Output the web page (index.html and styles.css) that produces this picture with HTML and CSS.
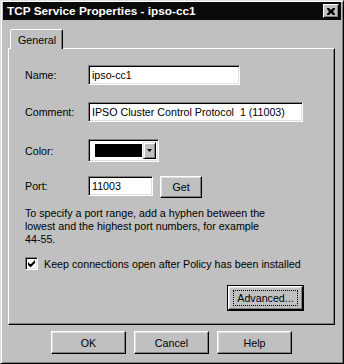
FILE: index.html
```html
<!DOCTYPE html>
<html lang="en">
<head>
    <meta charset="UTF-8">
    <title>TCP Service Properties - ipso-cc1</title>
    <link rel="stylesheet" href="styles.css">
</head>
<body>
    <div class="window">
        <div class="titlebar">
            <span class="title">TCP Service Properties - ipso-cc1</span>
            <span class="close-btn">
                <svg width="8" height="7" viewBox="0 0 8 7">
                    <path d="M0 0h2l2 2 2-2h2v1l-2 2.5 2 2.5v1h-2l-2-2-2 2h-2v-1l2-2.5-2-2.5z" fill="#000"/>
                </svg>
            </span>
        </div>
        <div class="body">
            <div class="tabs">
                <div class="tab">General</div>
            </div>
            <div class="panel">
                <div class="row row-name">
                    <span class="label">Name:</span>
                    <div class="field field-name">ipso-cc1</div>
                </div>
                <div class="row row-comment">
                    <span class="label">Comment:</span>
                    <div class="field field-comment">IPSO Cluster Control Protocol &nbsp;1 (11003)</div>
                </div>
                <div class="row row-color">
                    <span class="label">Color:</span>
                    <div class="combo">
                        <div class="swatch"></div>
                        <div class="combo-arrow">
                            <svg width="5" height="3" viewBox="0 0 5 3"><path d="M0 0h5l-2.5 3z" fill="#000"/></svg>
                        </div>
                    </div>
                </div>
                <div class="row row-port">
                    <span class="label">Port:</span>
                    <div class="field field-port">11003</div>
                    <div class="btn btn-get">Get</div>
                </div>
                <p class="hint">To specify a port range, add a hyphen between the<br>lowest and the highest port numbers, for example<br>44-55.</p>
                <div class="check-row">
                    <span class="checkbox">
                        <svg width="7" height="7" viewBox="0 0 7 7"><path d="M0 2v3l2 2h1l4-4v-3l-4 4h-1z" fill="#000"/></svg>
                    </span>
                    <span>Keep connections open after Policy has been installed</span>
                </div>
                <div class="advanced-row">
                    <div class="btn btn-default"><span class="focus">Advanced...</span></div>
                </div>
            </div>
            <div class="footer">
                <div class="btn btn-footer">OK</div>
                <div class="btn btn-footer">Cancel</div>
                <div class="btn btn-footer">Help</div>
            </div>
        </div>
    </div>
</body>
</html>
```

FILE: styles.css
```css
*{
    box-sizing: border-box;
}
html,
body {
    margin: 0;
    padding: 0;
    background-color: #c0c0c0;
    font-family: 'Liberation Sans', Arial, sans-serif;
    font-size: 10.7px;
    color: #000;
}
.window {
    width: 344px;
    height: 364px;
    padding: 2px;
    background-color: #c0c0c0;
    border: 1px solid;
    border-color: #dfdfdf #000 #000 #dfdfdf;
    box-shadow: inset 1px 1px #fff, inset -1px -1px #808080;
}
.titlebar {
    height: 18px;
    margin-top: -1px;
    background-color: #0a0a0a;
    display: flex;
    align-items: center;
    justify-content: space-between;
    padding: 0 2px 0 4px;
}
.title {
    color: #fff;
    font-weight: bold;
    font-size: 11.8px;
}
.close-btn {
    width: 16px;
    height: 14px;
    background-color: #c0c0c0;
    border: 1px solid;
    border-color: #fff #000 #000 #fff;
    box-shadow: inset -1px -1px #808080;
    display: flex;
    align-items: center;
    justify-content: center;
}
.body {
    padding: 9px 5px 0 5px;
}
.tabs {
    display: flex;
    padding-left: 2px;
    height: 19px;
    position: relative;
    z-index: 1;
}
.tab {
    width: 53px;
    height: 20px;
    padding: 4px 0 0 7px;
    background-color: #c0c0c0;
    border: 1px solid;
    border-bottom: none;
    border-color: #fff #000 #000 #fff;
    border-radius: 2px 2px 0 0;
    box-shadow: inset -1px 0 #808080;
}
.panel {
    width: 327px;
    height: 277px;
    padding: 16px 0 0 16px;
    border: 1px solid;
    border-color: #fff #000 #000 #fff;
    box-shadow: inset -1px -1px #808080;
}
.row {
    display: flex;
    align-items: center;
}
.label {
    width: 63px;
}
.field {
    height: 20px;
    padding: 3px 0 0 3px;
    background-color: #fff;
    border: 1px solid;
    border-color: #808080 #fff #fff #808080;
    box-shadow: inset 1px 1px #000, inset -1px -1px #dfdfdf;
    white-space: pre;
}
.field-name {
    width: 152px;
}
.row-comment {
    margin-top: 17px;
}
.field-comment {
    width: 215px;
}
.row-color {
    margin-top: 17px;
}
.combo {
    width: 71px;
    height: 23px;
    display: flex;
    align-items: center;
    padding: 2px 2px 2px 6px;
    background-color: #fff;
    border: 1px solid;
    border-color: #808080 #fff #fff #808080;
    box-shadow: inset 1px 1px #000, inset -1px -1px #dfdfdf;
}
.swatch {
    width: 47px;
    height: 13px;
    background-color: #000;
}
.combo-arrow {
    margin-left: auto;
    width: 13px;
    height: 17px;
    background-color: #c0c0c0;
    border: 1px solid;
    border-color: #dfdfdf #000 #000 #dfdfdf;
    box-shadow: inset 1px 1px #fff, inset -1px -1px #808080;
    display: flex;
    align-items: center;
    justify-content: center;
}
.row-port {
    margin-top: 14px;
    align-items: flex-start;
}
.row-port .label {
    padding-top: 4px;
}
.field-port {
    width: 65px;
}
.btn {
    background-color: #c0c0c0;
    border: 1px solid;
    border-color: #fff #000 #000 #fff;
    box-shadow: inset -1px -1px #808080, inset 1px 1px #dfdfdf;
    display: flex;
    align-items: center;
    justify-content: center;
}
.btn-get {
    width: 42px;
    height: 22px;
    margin-left: 7px;
}
.hint {
    margin: 9px 0 0 0;
    line-height: 13px;
}
.check-row {
    margin-top: 11px;
    display: flex;
    align-items: center;
    gap: 6px;
}
.checkbox {
    width: 13px;
    height: 13px;
    background-color: #fff;
    border: 1px solid;
    border-color: #808080 #fff #fff #808080;
    box-shadow: inset 1px 1px #000, inset -1px -1px #dfdfdf;
    display: flex;
    align-items: center;
    justify-content: center;
}
.advanced-row {
    display: flex;
    justify-content: flex-end;
    margin-top: 16px;
    padding-right: 31px;
}
.btn-default {
    width: 75px;
    height: 24px;
    outline: 1px solid #000;
}
.focus {
    border: 1px dotted #000;
    padding: 1px 3px;
}
.footer {
    display: flex;
    gap: 8px;
    margin-top: 6px;
    padding-left: 43px;
}
.btn-footer {
    width: 75px;
    height: 23px;
}
```
